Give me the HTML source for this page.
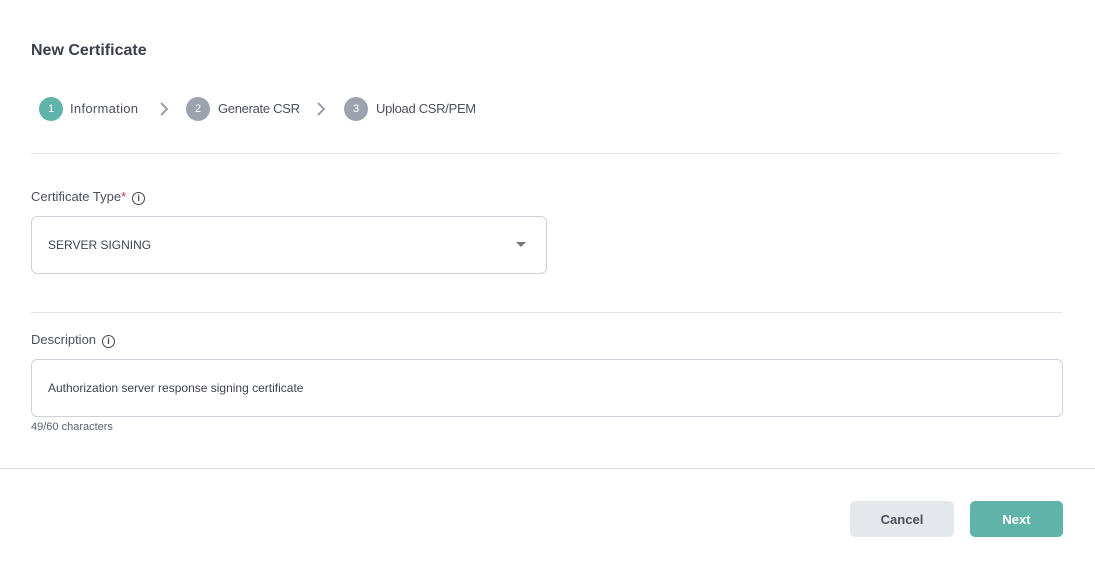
<!DOCTYPE html>
<html><head><style>
*{box-sizing:border-box;margin:0;padding:0}
body{width:1095px;height:565px;background:#fff;font-family:"Liberation Sans",sans-serif;position:relative;overflow:hidden;color:#3d4350}
.a{position:absolute}
.circ{position:absolute;width:24px;height:24px;border-radius:50%;color:#fff;font-size:11px;text-align:center;line-height:24px;top:97px}
.st{position:absolute;top:101px;font-size:13px;color:#4a5060}
.hr{position:absolute;left:31px;width:1031px;height:1px;background:#e3e5e8}
.lbl{position:absolute;font-size:13px;color:#4a5060}
.box{position:absolute;border:1px solid #cdd2da;border-radius:6px;background:#fff}
.info{display:inline-block;width:13px;height:13px;border:1.3px solid #444;border-radius:50%;font-size:9px;font-weight:bold;text-align:center;line-height:11px;vertical-align:0px;margin-left:6px;color:#444}
.btn{position:absolute;top:501px;height:36px;border-radius:5px;font-size:13px;font-weight:bold;text-align:center;line-height:37px}
</style></head><body>
<div class="a" style="left:31px;top:42px;font-size:16px;font-weight:bold;color:#3a3f4b">New Certificate</div>
<div class="circ" style="left:39px;background:#5fb3a9">1</div>
<div class="st" style="left:70px;letter-spacing:0.3px">Information</div>
<svg class="a" style="left:158px;top:101px" width="12" height="16"><path d="M3 2l6 6-6 6" stroke="#9aa0ab" stroke-width="2" fill="none"/></svg>
<div class="circ" style="left:186px;background:#9ca3af">2</div>
<div class="st" style="left:218px;letter-spacing:-0.3px">Generate CSR</div>
<svg class="a" style="left:315px;top:101px" width="12" height="16"><path d="M3 2l6 6-6 6" stroke="#9aa0ab" stroke-width="2" fill="none"/></svg>
<div class="circ" style="left:344px;background:#9ca3af">3</div>
<div class="st" style="left:376px;letter-spacing:-0.3px">Upload CSR/PEM</div>
<div class="hr" style="top:153px"></div>
<div class="lbl" style="left:31px;top:189px">Certificate Type<span style="color:#c0304a">*</span><span class="info">i</span></div>
<div class="box" style="left:31px;top:216px;width:516px;height:58px"></div>
<div class="a" style="left:48px;top:238px;font-size:12px;color:#3d4350">SERVER SIGNING</div>
<svg class="a" style="left:515px;top:241px" width="12" height="8"><path d="M1 1h10l-5 5z" fill="#777"/></svg>
<div class="hr" style="top:312px"></div>
<div class="lbl" style="left:31px;top:332px">Description<span class="info">i</span></div>
<div class="box" style="left:31px;top:359px;width:1032px;height:58px"></div>
<div class="a" style="left:48px;top:381px;font-size:12px;color:#3d4350">Authorization server response signing certificate</div>
<div class="a" style="left:31px;top:421px;font-size:11px;color:#5a606c">49/60 characters</div>
<div class="a" style="left:0;top:468px;width:1095px;height:1px;background:#e3e5e8"></div>
<div class="btn" style="left:850px;width:104px;background:#e4e7ec;color:#4a5060">Cancel</div>
<div class="btn" style="left:970px;width:93px;background:#5fb3a9;color:#fff">Next</div>
</body></html>
